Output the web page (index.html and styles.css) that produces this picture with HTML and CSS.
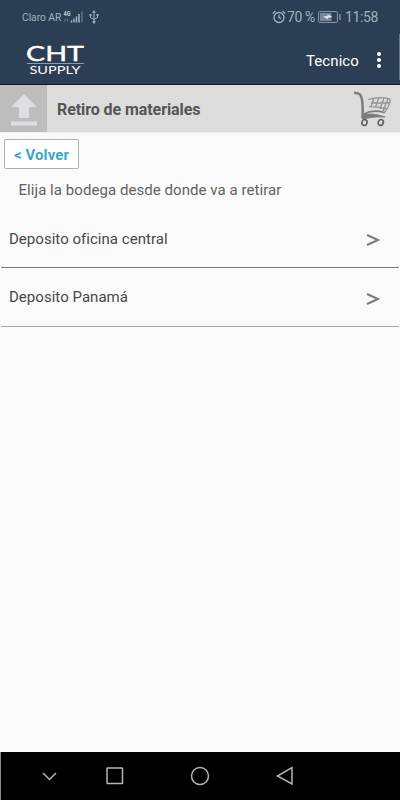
FILE: index.html
```html
<!DOCTYPE html>
<html lang="es">
<head>
<meta charset="utf-8">
<title>Retiro de materiales</title>
<link rel="stylesheet" href="styles.css">
</head>
<body>
<div class="screen">
  <header class="top">
    <div class="status">
      <span class="carrier">Claro AR</span>
      <svg class="signal" width="21" height="16" viewBox="0 0 21 16">
        <text x="0.5" y="6.5" class="net" textLength="7" lengthAdjust="spacingAndGlyphs">4G</text>
        <path d="M2 12.500V9.500M4.500 9.500V12.500" stroke="#61758a" stroke-width="1"/>
        <path d="M8.500 13.500V11.500M11 13.500V9.500M13.500 13.500V7.500M16 13.500V5" stroke="#a9b5c1" stroke-width="1.500"/>
        <path d="M19 13.500V2.500" stroke="#61758a" stroke-width="1.500"/>
      </svg>
      <svg class="usb" width="10" height="14" viewBox="0 0 10 14" fill="none" stroke="#a0adba">
        <path d="M5 2V12M1.500 5V7.500L5 9.500L8.500 7.500V5"/>
        <path d="M5 0L6.800 2.800H3.200ZM.5 4H2.500V6H.5ZM7.500 4H9.500V6H7.500Z" fill="#a0adba" stroke="none"/>
        <circle cx="5" cy="12" r="1.500" fill="#a0adba" stroke="none"/>
      </svg>
      <svg class="alarm" width="14" height="14" viewBox="0 0 14 14" fill="none" stroke="#a4b0bd" stroke-width="1.300">
        <circle cx="7" cy="7.500" r="5"/><path d="M7 4.800V7.700L9 8.700M.7 3.500L3.500 1M10.500 1L13.300 3.500"/>
      </svg>
      <span class="percent">70 %</span>
      <svg class="battery" width="23" height="12" viewBox="0 0 23 12">
        <rect x=".6" y=".6" width="18.800" height="10.800" rx="1" fill="none" stroke="#8d9baa"/>
        <rect x="2" y="2" width="11.500" height="8" fill="#75869a"/>
        <path d="M5 5.600L9.500 5V3.300L14.500 6L10 6.800V8.500Z" fill="#e0e5ea"/>
        <path d="M22 3V9" stroke="#8d9baa" stroke-width="1.300"/>
      </svg>
      <span class="clock">11:58</span>
    </div>
    <div class="appbar">
      <svg class="logo" width="58" height="32" viewBox="0 0 58 32">
        <text x="-1" y="17" class="cht" textLength="58" lengthAdjust="spacingAndGlyphs">CHT</text>
        <path d="M0 19.500H57" stroke="#8d9baa"/>
        <text x="2.500" y="30" class="supply" textLength="51" lengthAdjust="spacingAndGlyphs">SUPPLY</text>
      </svg>
      <span class="user">Tecnico</span>
      <span class="menu"><i></i><i></i><i></i></span>
      <span class="edge"></span>
    </div>
  </header>
  <div class="titlebar">
    <div class="upload">
      <svg width="26" height="32" viewBox="0 0 26 32" fill="#dedfe2"><path d="M13 0L26 13H18V24H8V13H0ZM0 27.500H26V31.500H0Z"/></svg>
    </div>
    <h1>Retiro de materiales</h1>
    <svg class="cart" width="38" height="36" viewBox="0 0 38 36" fill="none" stroke="#7c7c7c">
      <path d="M1 2Q5 1.500 7 3.500Q9 6 9.500 13Q10 20 9.500 26" stroke-width="2.500"/>
      <path d="M8.500 26Q14 20 32 26Q19 25 10 28.500Z" fill="#7c7c7c" stroke-width="1"/>
      <path d="M15 8.500Q27 5 37 8Q38 13 31 22M16 15.500Q25 15.500 34 18M18 12H37M21 7L18 16M26 6.500L22.500 16M31 7L27 18M35 8L30 20" stroke="#929292" stroke-width="1.300"/>
      <path d="M10 23.500Q20 18 31 21.500" stroke-width="1.700"/>
      <ellipse cx="11.500" cy="31.500" rx="2.500" ry="3" transform="rotate(20 11.500 31.500)" stroke="#606060" stroke-width="1.600"/>
      <ellipse cx="27.800" cy="31.500" rx="2.500" ry="3" transform="rotate(20 27.800 31.500)" stroke="#606060" stroke-width="1.600"/>
    </svg>
  </div>
  <main>
    <button class="back">&lt; Volver</button>
    <p class="hint">Elija la bodega desde donde va a retirar</p>
    <ul class="list">
      <li><span>Deposito oficina central</span><svg width="14" height="12" viewBox="0 0 14 12"><path d="M1 1L12 6L1 11"/></svg></li>
      <li><span>Deposito Panamá</span><svg width="14" height="12" viewBox="0 0 14 12"><path d="M1 1L12 6L1 11"/></svg></li>
    </ul>
  </main>
  <nav class="navbar">
    <svg class="down" width="15" height="9" viewBox="0 0 15 9"><path d="M1 1L7.500 7.500L14 1"/></svg>
    <svg class="square" width="18" height="18" viewBox="0 0 18 18"><rect x="1" y="1" width="15.500" height="15.500" rx=".5"/></svg>
    <svg class="circle" width="20" height="20" viewBox="0 0 20 20"><circle cx="10" cy="10" r="8.500"/></svg>
    <svg class="tri" width="18" height="20" viewBox="0 0 18 20"><path d="M16 1.500V18L1.500 10Z"/></svg>
  </nav>
</div>
</body>
</html>
```
FILE: styles.css
```css
* { box-sizing: border-box; }
body { margin: 0; font-family: Roboto, "Liberation Sans", sans-serif; background: #fafafa; }
svg { display: block; flex: none; overflow: visible; }
.screen { width: 400px; height: 800px; display: flex; flex-direction: column; background: #fafafa; overflow: hidden; }
.top { height: 85px; flex: none; background: #2b3e54; border-bottom: 1px solid #0b1931; }
.status { height: 34px; display: flex; align-items: center; padding-left: 22px; color: #a4b0bd; white-space: nowrap; }
.carrier { width: 41px; font-size: 10.3px; letter-spacing: -.05px; }
.net { font: bold 7px Roboto, sans-serif; fill: #c0cad4; }
.usb { margin-left: 5px; }
.alarm { margin-left: 173px; }
.percent { width: 31px; margin-left: 1px; font-size: 14px; letter-spacing: -.4px; }
.battery { margin-left: 0; }
.clock { margin-left: 4px; font-size: 14px; letter-spacing: -.4px; }
.appbar { height: 50px; display: flex; align-items: flex-start; padding-left: 27px; color: #fff; }
.logo { margin-top: 10px; fill: #fff; }
.cht { font: 400 21px Lato, sans-serif; stroke: #fff; stroke-width: .4px; }
.supply { font: 400 11.5px Lato, sans-serif; }
.user { width: 54px; margin: 17px 0 0 221px; font-size: 15px; line-height: 20px; letter-spacing: .08px; }
.menu { width: 4px; margin: 18px 0 0 17px; display: grid; gap: 2px; }
.menu i { width: 4px; height: 4px; border-radius: 50%; background: #fff; }
.edge { width: 1px; height: 46px; margin-left: auto; background: #60798a; }
.titlebar { height: 48px; flex: none; display: flex; align-items: center; background: #dcdcdc; border-bottom: 1px solid #eee; }
.upload { width: 47px; height: 47px; display: flex; justify-content: center; padding-top: 9px; background: #bdbdbd; }
h1 { margin: 2px 0 0 10px; width: 296px; font-size: 16px; font-weight: 700; line-height: 20px; letter-spacing: -.08px; color: #555; }
main { flex: 1; }
.back { display: block; width: 75px; height: 30px; margin: 6px 0 0 4px; padding: 1px 0 0; border: 1px solid #b0b0b0; border-radius: 2px; background: #fff; font: 700 15px/20px Roboto, sans-serif; letter-spacing: .1px; color: #3ba7c9; }
.hint { margin: 11px 0 0 18.5px; font-size: 15px; line-height: 20px; letter-spacing: .055px; color: #626262; white-space: nowrap; }
.list { list-style: none; margin: 10px 1px 0; padding: 0; }
.list li { height: 58px; display: flex; align-items: center; justify-content: space-between; padding: 0 19px 0 8px; border-bottom: 1px solid #7c7d82; font-size: 15px; letter-spacing: .03px; color: #484848; }
.list li + li { height: 59px; border-bottom-color: #a1a8b2; }
.list svg { margin-top: 3px; fill: none; stroke: #7b7b7b; stroke-width: 2px; }
.navbar { height: 48px; flex: none; display: flex; align-items: center; padding-left: 41px; background: #000; border-left: 1px solid #888; }
.navbar svg { fill: none; stroke: #b5b5b5; stroke-width: 1.5px; }
.square { margin-left: 49px; }
.circle { margin-left: 66px; }
.tri { margin-left: 66px; }
```
